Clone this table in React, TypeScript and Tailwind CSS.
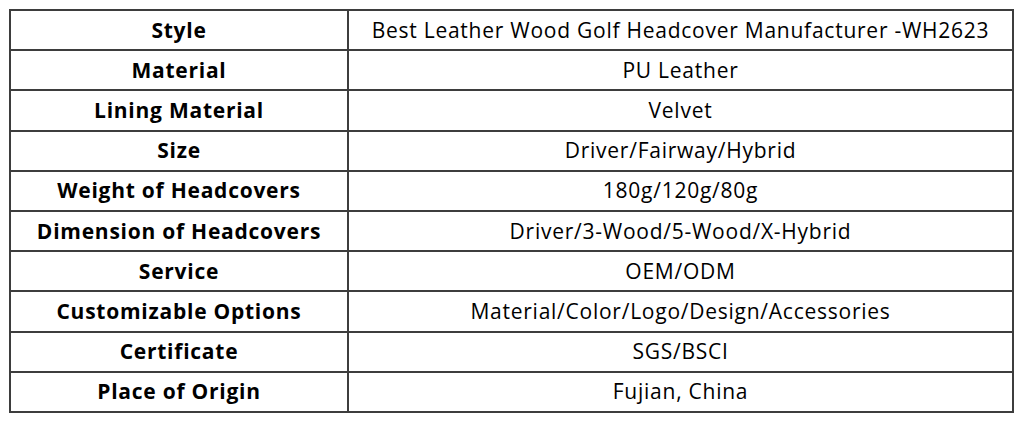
import React from "react";

const rows = [
  ["Style", "Best Leather Wood Golf Headcover Manufacturer -WH2623"],
  ["Material", "PU Leather"],
  ["Lining Material", "Velvet"],
  ["Size", "Driver/Fairway/Hybrid"],
  ["Weight of Headcovers", "180g/120g/80g"],
  ["Dimension of Headcovers", "Driver/3-Wood/5-Wood/X-Hybrid"],
  ["Service", "OEM/ODM"],
  ["Customizable Options", "Material/Color/Logo/Design/Accessories"],
  ["Certificate", "SGS/BSCI"],
  ["Place of Origin", "Fujian, China"],
];

export default function App() {
  return (
    <div className="w-[1024px] h-[423px] bg-white pt-[9px] pl-[9px]" style={{ fontFamily: '"Open Sans", "Noto Sans", sans-serif' }}>
      <table className="w-[1005px] border-collapse text-[21px] tracking-[0.75px] text-black">
        <tbody>
          {rows.map(([label, value]) => (
            <tr key={label} className="h-[40.2px]">
              <td className="w-[338px] border-2 border-[#3d3d3d] text-center font-bold p-0 leading-none">
                {label}
              </td>
              <td className="border-2 border-[#3d3d3d] text-center p-0 leading-none">
                {value}
              </td>
            </tr>
          ))}
        </tbody>
      </table>
    </div>
  );
}
